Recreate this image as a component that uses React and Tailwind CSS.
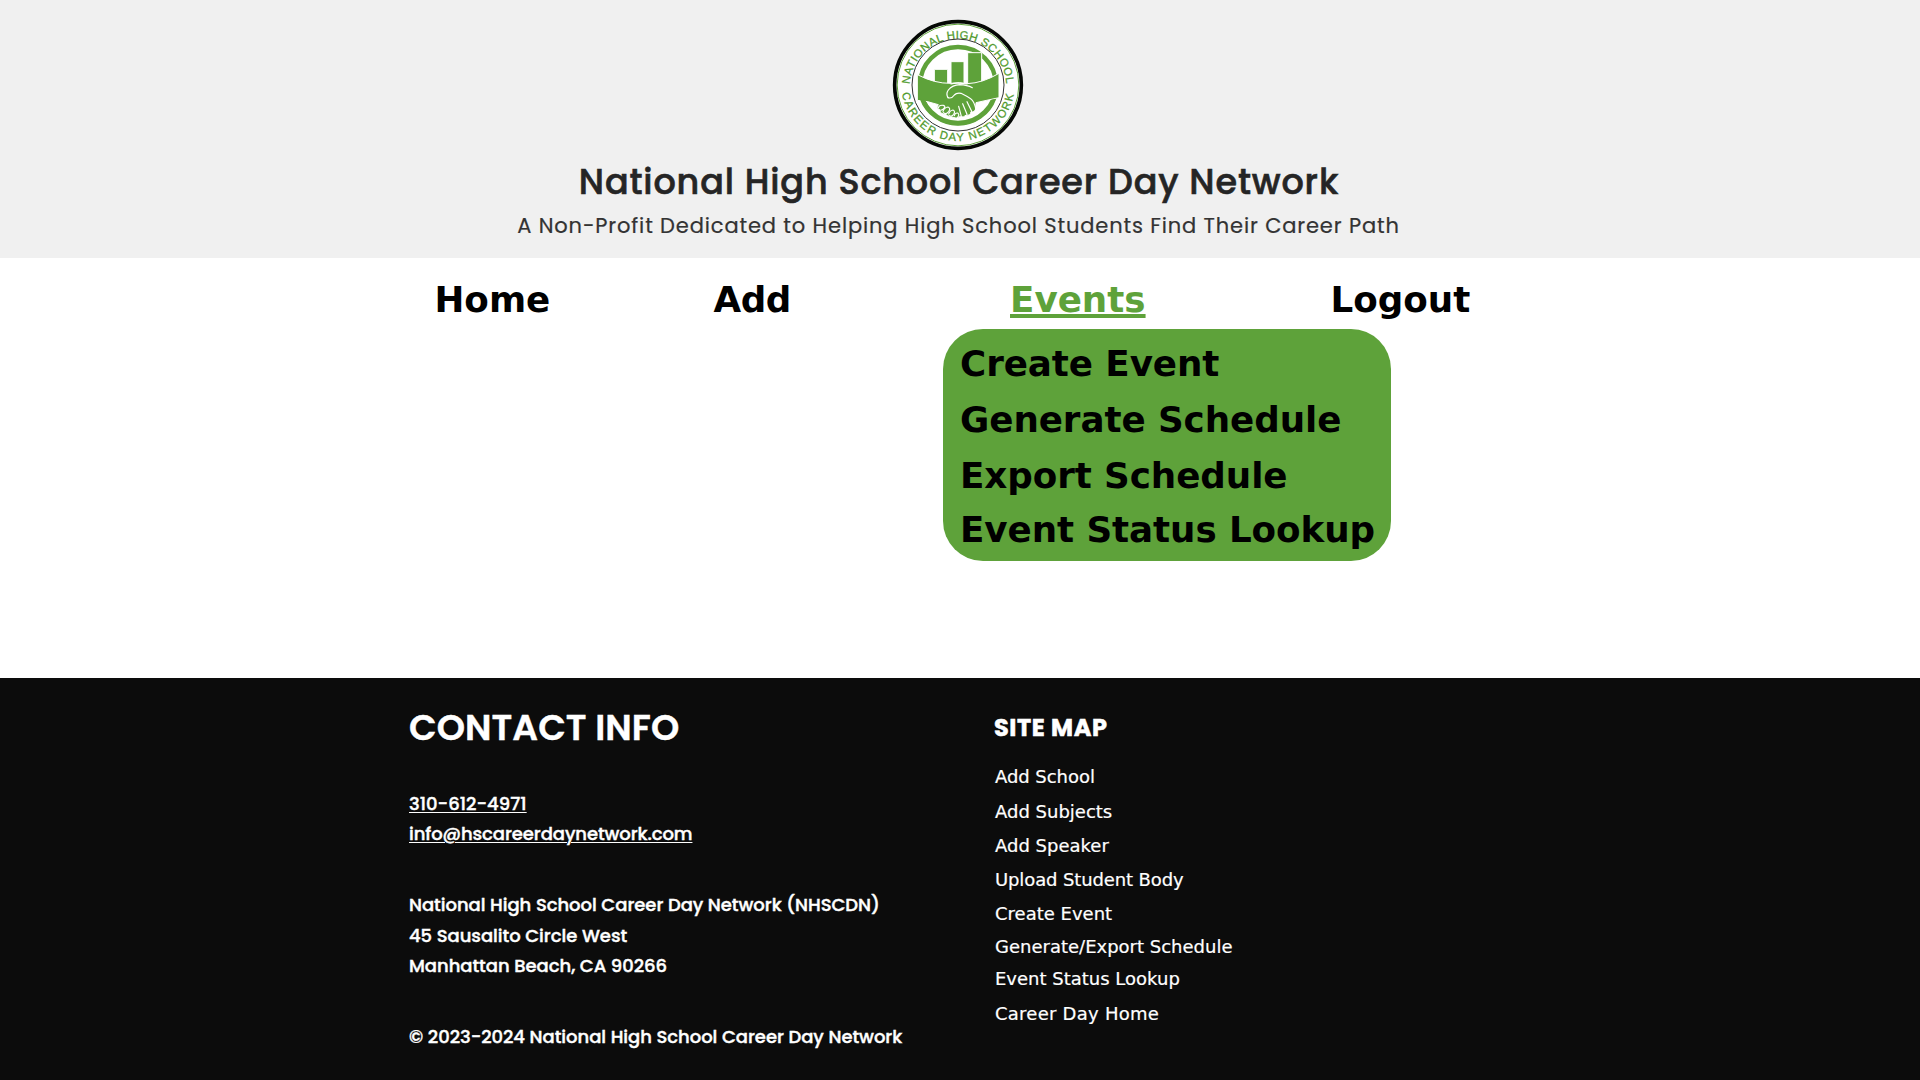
import React from "react";

const GREEN = "#5ea23a";

function Logo() {
  return (
    <svg width="132" height="132" viewBox="37 26 396 396" className="-translate-x-[2px]">
      <defs>
        <path id="arcTop" d="M 90 230 A 145 145 0 0 1 380 230" />
        <path id="arcBottom" d="M 65 222 A 170 170 0 0 0 405 222" />
      </defs>
      <circle cx="235" cy="224" r="190" fill="#fff" stroke="#050805" strokeWidth="11" />
      <circle cx="235" cy="224" r="182.500" fill="none" stroke={GREEN} strokeWidth="3" />
      <g fill="#4f9a2c" fontFamily='"Liberation Sans", Arial, sans-serif' fontSize="34" stroke="#4f9a2c" strokeWidth="0.8">
        <text textAnchor="middle" letterSpacing="1.2">
          <textPath href="#arcTop" startOffset="50%">NATIONAL HIGH SCHOOL</textPath>
        </text>
        <text textAnchor="middle" letterSpacing="4.4">
          <textPath href="#arcBottom" startOffset="50%">CAREER DAY NETWORK</textPath>
        </text>
      </g>
      <circle cx="235" cy="224" r="138" fill="#fff" stroke="#333" strokeWidth="3" />
      <circle cx="235" cy="224" r="114" fill="none" stroke={GREEN} strokeWidth="13" />
      <g fill={GREEN} stroke="#fff" strokeWidth="3">
        <path d="M164 177h40v46h-40zM214 154h39v70h-39zM264 127h42v94h-42z" />
      </g>
      <path
        d="M113 193 Q165 220 214 219 Q240 214 262 220 Q310 218 358 189 L358 262 Q320 270 289 277 L288 296 Q284 307 274 304 Q272 317 260 314 Q252 323 240 319 Q230 327 217 320 Q204 322 199 312 Q183 312 180 300 Q168 292 176 283 Q145 272 113 270 Z"
        fill={GREEN}
        stroke="#fff"
        strokeWidth="3"
      />
      <path d="M120 265 A122 122 0 0 0 350 265 L336 268 A108 108 0 0 1 137 270 Z" fill={GREEN} />
      <g fill="none" stroke="#fff" strokeWidth="3.500" strokeLinecap="round" strokeLinejoin="round">
        <path d="M214 221 Q228 216 262 221" />
        <path d="M205 262 Q198 250 206 239 Q218 224 240 223 Q263 224 278 232" />
        <path d="M205 262 Q216 266 224 254 Q230 247 244 249 Q262 258 273 265 Q284 272 289 298" />
        <path d="M262 274 L276 303 M249 280 L262 312 M237 288 L245 318" />
        <path d="M176 293 Q178 283 191 285 Q200 288 191 296 Q182 303 178 297" />
        <path d="M190 303 Q194 291 205 290 Q214 294 207 304 Q198 314 191 307" />
        <path d="M207 311 Q211 300 220 299 Q228 303 222 312 Q215 321 208 315" />
        <path d="M224 316 Q226 307 234 308 Q240 312 235 319" />
      </g>
    </svg>
  );
}

const menu = [
  ["Create Event", "leading-[56px]"],
  ["Generate Schedule", "leading-[56px]"],
  ["Export Schedule", "leading-[56px]"],
  ["Event Status Lookup", "leading-[51px]"],
];

const siteMap = [
  ["Add School", "h-[35px] tracking-[-0.05px]"],
  ["Add Subjects", "h-[34px]"],
  ["Add Speaker", "h-[34px]"],
  ["Upload Student Body", "h-[34px] tracking-[-0.12px]"],
  ["Create Event", "h-[33px]"],
  ["Generate/Export Schedule", "h-[32px]"],
  ["Event Status Lookup", "h-[35px]"],
  ["Career Day Home", "h-[34px] tracking-[0.25px]"],
];

export default function App() {
  return (
    <div className="flex h-[1080px] w-[1920px] flex-col overflow-hidden bg-white font-['Poppins','Inter',sans-serif]">
      <header className="flex h-[258px] shrink-0 flex-col items-center bg-[#f0f0f0] pt-[19px]">
        <Logo />
        <h1 className="mt-[7px] -translate-x-px text-[35px] leading-[48px] font-medium tracking-[0.84px] whitespace-nowrap text-[#252525] [-webkit-text-stroke:0.6px_#252525]">
          National High School Career Day Network
        </h1>
        <p className="mt-1 -translate-x-[1.5px] text-[21px] leading-[32px] tracking-[0.86px] whitespace-nowrap text-[#333] [-webkit-text-stroke:0.2px_#333]">
          A Non-Profit Dedicated to Helping High School Students Find Their Career Path
        </p>
      </header>

      <nav className="flex h-[420px] shrink-0 pt-[22px] pl-[434.5px] font-['DejaVu_Sans',Verdana,sans-serif] text-[35.7px] leading-[40px] font-bold text-black">
        <a className="w-[279px]">Home</a>
        <a className="w-[296.5px] tracking-[-0.4px]">Add</a>
        <div className="relative w-[320.5px]">
          <a className="text-[#5ea23a] underline decoration-4 underline-offset-[2px]">Events</a>
          <ul className="absolute top-[49px] -left-[67px] h-[232px] w-[448px] rounded-[40px] bg-[#5ea23a] pt-[7px] pl-[17px] tracking-[-0.06px]">
            {menu.map(([label, cls]) => (
              <li key={label} className={`${cls} whitespace-nowrap`}>{label}</li>
            ))}
          </ul>
        </div>
        <a>Logout</a>
      </nav>

      <footer className="flex grow bg-[#0c0c0c] pl-[409px] text-white">
        <div className="w-[586px] pt-[23px] text-[18px] leading-[31px] font-medium tracking-[-0.04px] [-webkit-text-stroke:0.4px_white]">
          <h2 className="text-[36px] leading-[54px] font-semibold tracking-[0.05px]">CONTACT INFO</h2>
          <div className="mt-[34px] leading-[30px]">
            <p className="tracking-[0.03px]"><a className="underline decoration-1 underline-offset-2">310-612-4971</a></p>
            <p className="tracking-[-0.08px]"><a className="underline decoration-1 underline-offset-2">info@hscareerdaynetwork.com</a></p>
          </div>
          <div className="mt-[41px] leading-[30.5px]">
            <p>National High School Career Day Network (NHSCDN)</p>
            <p>45 Sausalito Circle West</p>
            <p>Manhattan Beach, CA 90266</p>
          </div>
          <p className="mt-[39.5px]">© 2023-2024 National High School Career Day Network</p>
        </div>
        <div className="pt-[32px]">
          <h3 className="-translate-x-px text-[24px] leading-[36px] font-bold tracking-[0.6px] [-webkit-text-stroke:0.5px_white]">SITE MAP</h3>
          <ul className="mt-[14px] font-['DejaVu_Sans',Verdana,sans-serif] text-[18px] leading-[34px] [-webkit-text-stroke:0.2px_white]">
            {siteMap.map(([label, cls]) => (
              <li key={label} className={cls}>{label}</li>
            ))}
          </ul>
        </div>
      </footer>
    </div>
  );
}
